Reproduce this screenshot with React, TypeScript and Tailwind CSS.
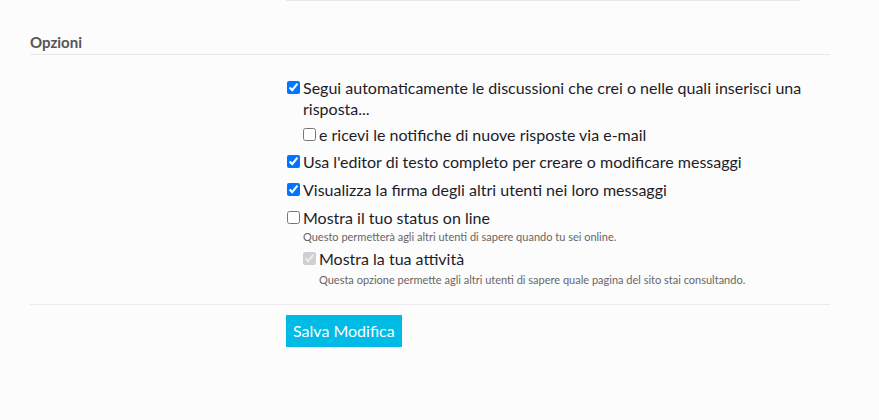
import React from 'react';

const Check = ({ checked, disabled }: { checked?: boolean; disabled?: boolean }) => (
  <input
    type="checkbox"
    defaultChecked={checked}
    disabled={disabled}
    className="m-0 mt-[4px] ml-[1px] w-[13px] h-[13px] shrink-0 accent-[#0075ff]"
  />
);

export default function App() {
  return (
    <div className="min-h-screen bg-[#fcfcfc] text-[#1c1c28]" style={{ fontFamily: 'Lato, "Open Sans", sans-serif' }}>
      <div className="ml-[286px] w-[514px] h-px bg-[#e8e8e8]" />

      <div className="ml-[30px] w-[800px]">
        {/* Header */}
        <div className="pt-[33px] pb-[4px] border-b border-[#e8e8e8]">
          <h3 className="text-[15px] font-bold text-[#555] leading-[16px]">Opzioni</h3>
        </div>

        {/* Options */}
        <div className="flex pt-[22px] pb-[15px] border-b border-[#ebebeb]">
          <div className="w-[256px] shrink-0" />
          <div className="flex flex-col text-[16px] leading-[21px]">
            <label className="flex gap-[3px]">
              <Check checked />
              <span>Segui automaticamente le discussioni che crei o nelle quali inserisci una risposta...</span>
            </label>
            <label className="flex gap-[3px] ml-[16px] mt-[5px]">
              <Check />
              <span>e ricevi le notifiche di nuove risposte via e-mail</span>
            </label>
            <label className="flex gap-[3px] mt-[6px]">
              <Check checked />
              <span>Usa l'editor di testo completo per creare o modificare messaggi</span>
            </label>
            <label className="flex gap-[3px] mt-[7px]">
              <Check checked />
              <span>Visualizza la firma degli altri utenti nei loro messaggi</span>
            </label>
            <div className="mt-[7px]">
              <label className="flex gap-[3px]">
                <Check />
                <span>Mostra il tuo status on line</span>
              </label>
              <p className="ml-[17px] text-[11px] leading-[18px] text-[#666]">
                Questo permetterà agli altri utenti di sapere quando tu sei online.
              </p>
            </div>
            <div className="ml-[16px] mt-[2px]">
              <label className="flex gap-[3px]">
                <Check checked disabled />
                <span>Mostra la tua attività</span>
              </label>
              <p className="ml-[17px] mt-[2px] text-[11px] leading-[18px] text-[#666]">
                Questa opzione permette agli altri utenti di sapere quale pagina del sito stai consultando.
              </p>
            </div>
          </div>
        </div>

        {/* Footer */}
        <div className="flex pt-[10px]">
          <div className="w-[256px] shrink-0" />
          <button className="h-[32px] bg-[#00bbe6] text-white text-[16px] leading-[20px] px-[7px]">
            Salva Modifica
          </button>
        </div>
      </div>
    </div>
  );
}
